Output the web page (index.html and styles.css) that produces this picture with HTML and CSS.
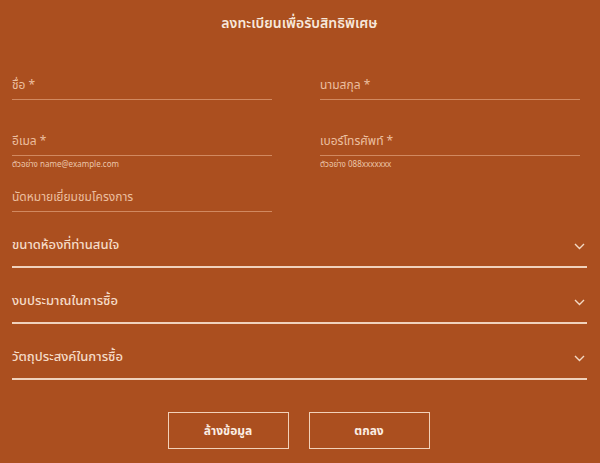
FILE: index.html
```html
<!DOCTYPE html>
<html lang="th">
<head>
<meta charset="utf-8">
<link rel="stylesheet" href="styles.css">
</head>
<body>
<form class="form">
  <h1 class="title">ลงทะเบียนเพื่อรับสิทธิพิเศษ</h1>
  <div class="grid">
    <div class="field"><div class="label">ชื่อ *</div></div>
    <div class="field"><div class="label">นามสกุล *</div></div>
    <div class="field"><div class="label">อีเมล *</div><div class="hint">ตัวอย่าง name@example.com</div></div>
    <div class="field"><div class="label">เบอร์โทรศัพท์ *</div><div class="hint">ตัวอย่าง 088xxxxxxx</div></div>
    <div class="field"><div class="label">นัดหมายเยี่ยมชมโครงการ</div></div>
  </div>
  <div class="selects">
    <div class="select"><span>ขนาดห้องที่ท่านสนใจ</span><svg class="chev" width="11" height="7" viewBox="0 0 11 7"><path d="M1 1l4.5 4.5L10 1" fill="none" stroke="#f3d9c4" stroke-width="1.4"/></svg></div>
    <div class="select"><span>งบประมาณในการซื้อ</span><svg class="chev" width="11" height="7" viewBox="0 0 11 7"><path d="M1 1l4.5 4.5L10 1" fill="none" stroke="#f3d9c4" stroke-width="1.4"/></svg></div>
    <div class="select"><span>วัตถุประสงค์ในการซื้อ</span><svg class="chev" width="11" height="7" viewBox="0 0 11 7"><path d="M1 1l4.5 4.5L10 1" fill="none" stroke="#f3d9c4" stroke-width="1.4"/></svg></div>
  </div>
  <div class="actions">
    <button type="button" class="btn">ล้างข้อมูล</button>
    <button type="button" class="btn">ตกลง</button>
  </div>
</form>
</body>
</html>
```
FILE: styles.css
```css
html, body {
  margin: 0;
  padding: 0;
  background: #ab4f1f;
}
body {
  font-family: "Noto Sans", "Noto Sans Thai", "DejaVu Sans", sans-serif;
  color: #f0c9ae;
  width: 600px;
  height: 463px;
  overflow: hidden;
}
.form {
  padding: 0 13px 0 12px;
}
.title {
  margin: 0;
  padding-top: 13px;
  height: 27px;
  text-align: center;
  font-size: 14px;
  font-weight: 600;
  color: #f7e7da;
}
.grid {
  display: grid;
  grid-template-columns: 260px 260px;
  column-gap: 48px;
  margin-top: 37px;
}
.field {
  height: 56px;
}
.field .label {
  font-size: 12px;
  line-height: 16px;
  padding-bottom: 6px;
  border-bottom: 1px solid rgba(240, 185, 150, 0.55);
  color: #ebbf9f;
}
.hint {
  font-size: 8px;
  line-height: 12px;
  margin-top: 2px;
  color: #ecc6aa;
}
.selects {
  margin-top: -31px;
}
.select {
  display: flex;
  justify-content: space-between;
  align-items: center;
  height: 54px;
  border-bottom: 2px solid #f0d2bc;
  box-sizing: border-box;
  padding: 10px 2px 0 0;
  font-size: 13px;
  font-weight: 500;
  color: #f5dcc8;
}
.select + .select {
  margin-top: 2px;
}
.chev {
  display: block;
  margin-top: 2px;
}
.actions {
  display: flex;
  justify-content: center;
  gap: 20px;
  margin-top: 32px;
  padding-right: 2px;
}
.btn {
  width: 121px;
  height: 37px;
  background: transparent;
  border: 1px solid #f2d1b9;
  color: #fbeee4;
  font-family: inherit;
  font-size: 12px;
  font-weight: 700;
}
```
